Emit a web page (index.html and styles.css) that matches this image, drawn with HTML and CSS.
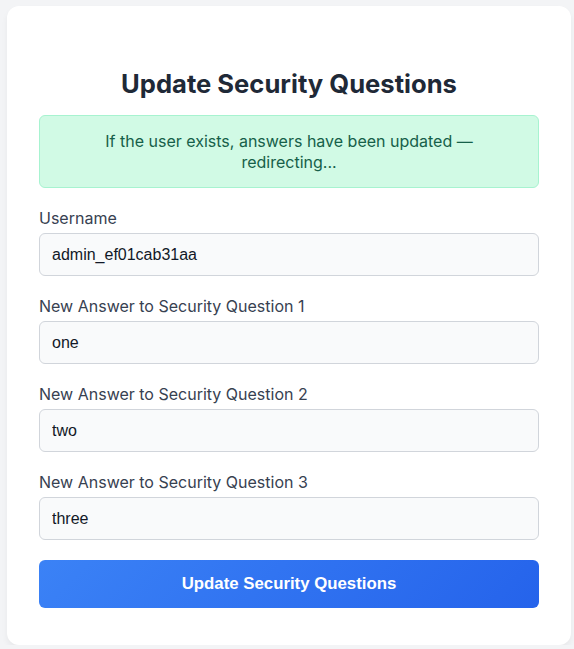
FILE: index.html
```html
<!DOCTYPE html>
<html>
<head>
<meta charset="utf-8">
<link rel="stylesheet" href="styles.css">
</head>
<body>
<div class="card">
  <h2 class="title">Update Security Questions</h2>
  <div class="alert">If the user exists, answers have been updated — redirecting...</div>
  <form class="form">
    <div class="group">
      <label class="label">Username</label>
      <input class="input" type="text" value="admin_ef01cab31aa">
    </div>
    <div class="group">
      <label class="label">New Answer to Security Question 1</label>
      <input class="input" type="text" value="one">
    </div>
    <div class="group">
      <label class="label">New Answer to Security Question 2</label>
      <input class="input" type="text" value="two">
    </div>
    <div class="group">
      <label class="label">New Answer to Security Question 3</label>
      <input class="input" type="text" value="three">
    </div>
    <button class="button" type="button">Update Security Questions</button>
  </form>
</div>
</body>
</html>
```
FILE: styles.css
```css
html, body {
  margin: 0;
  padding: 0;
  background: #f3f4f6;
  font-family: Inter, "Noto Sans", sans-serif;
}
body {
  padding: 6px 3px 0 7px;
}
.card {
  background: #ffffff;
  border-radius: 12px;
  padding: 40px 32px 37px 32px;
  box-shadow: 0 4px 6px rgba(0,0,0,0.05);
}
.title {
  margin: 22px 0 15px 0;
  text-align: center;
  font-size: 25.6px;
  line-height: 32px;
  font-weight: 700;
  color: #1f2937;
}
.alert {
  background: #d1fae5;
  border: 1px solid #a7f3d0;
  color: #166049;
  border-radius: 6px;
  padding: 15px 16px 14px;
  text-align: center;
  font-size: 16px;
  line-height: 21px;
  margin-bottom: 20px;
}
.form {
  display: flex;
  flex-direction: column;
}
.group {
  display: flex;
  flex-direction: column;
  margin-bottom: 20px;
}
.label {
  font-size: 16px;
  line-height: 20px;
  color: #374151;
  margin-bottom: 5px;
}
.input {
  font-family: "Liberation Sans", Arial, sans-serif;
  font-size: 16px;
  color: #111827;
  background: #f9fafb;
  border: 1px solid #d1d5db;
  border-radius: 6px;
  padding: 12px;
  height: 43px;
  box-sizing: border-box;
  outline: none;
}
.button {
  font-family: "Liberation Sans", Arial, sans-serif;
  font-size: 16.8px;
  font-weight: 700;
  color: #ffffff;
  height: 48px;
  border: none;
  border-radius: 6px;
  background: linear-gradient(135deg, #3b82f6, #2563eb);
  cursor: pointer;
}
```
